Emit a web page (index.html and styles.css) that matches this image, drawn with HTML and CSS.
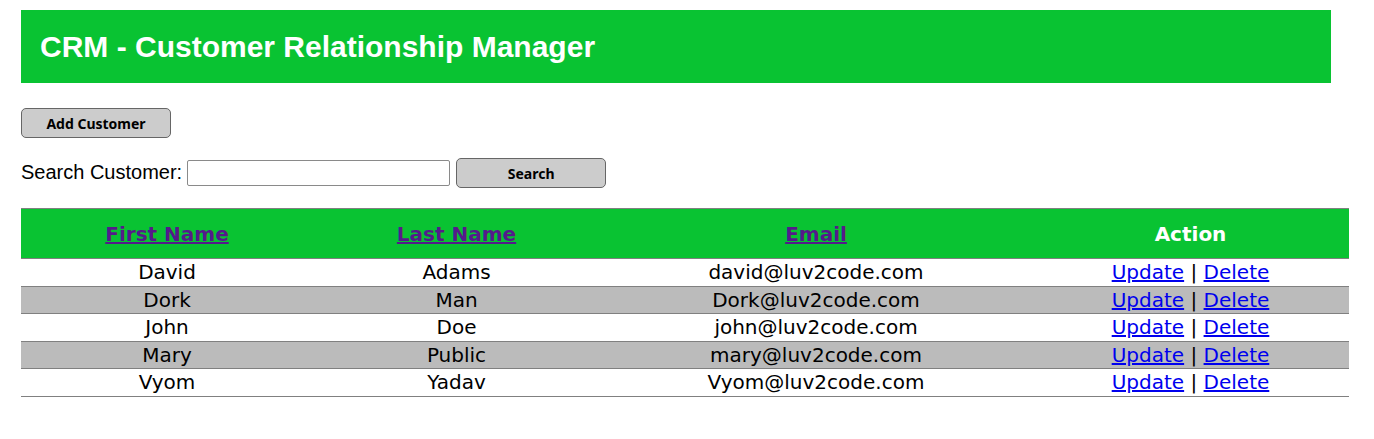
FILE: index.html
```html
<!DOCTYPE html>
<html>
<head>
<meta charset="utf-8">
<title>List Customers</title>
<link rel="stylesheet" href="styles.css">
</head>
<body>
<div class="wrapper">
  <div class="header">
    <h2 class="title">CRM - Customer Relationship Manager</h2>
  </div>
  <div class="container">
    <button class="btn add-button" type="button">Add Customer</button>
    <form class="search-row">
      <label class="search-label">Search Customer:</label>
      <input class="search-input" type="text">
      <button class="btn search-button" type="button">Search</button>
    </form>
    <table class="list">
      <colgroup>
        <col class="c1"><col class="c2"><col class="c3"><col class="c4">
      </colgroup>
      <tr>
        <th><a class="sort" href="#">First Name</a></th>
        <th><a class="sort" href="#">Last Name</a></th>
        <th><a class="sort" href="#">Email</a></th>
        <th>Action</th>
      </tr>
      <tr>
        <td>David</td><td>Adams</td><td>david@luv2code.com</td>
        <td><a class="act" href="#">Update</a> | <a class="act" href="#">Delete</a></td>
      </tr>
      <tr>
        <td>Dork</td><td>Man</td><td>Dork@luv2code.com</td>
        <td><a class="act" href="#">Update</a> | <a class="act" href="#">Delete</a></td>
      </tr>
      <tr>
        <td>John</td><td>Doe</td><td>john@luv2code.com</td>
        <td><a class="act" href="#">Update</a> | <a class="act" href="#">Delete</a></td>
      </tr>
      <tr>
        <td>Mary</td><td>Public</td><td>mary@luv2code.com</td>
        <td><a class="act" href="#">Update</a> | <a class="act" href="#">Delete</a></td>
      </tr>
      <tr>
        <td>Vyom</td><td>Yadav</td><td>Vyom@luv2code.com</td>
        <td><a class="act" href="#">Update</a> | <a class="act" href="#">Delete</a></td>
      </tr>
    </table>
  </div>
</div>
</body>
</html>
```

FILE: styles.css
```css
html, body {
  margin: 0;
  padding: 0;
  background: #ffffff;
}

.wrapper {
  padding: 10px 0 0 21px;
  font-family: "DejaVu Sans", Verdana, sans-serif;
}

.header {
  width: 1291px;
  height: 73px;
  padding-left: 19px;
  background: #09c332;
  display: flex;
  align-items: center;
}

.title {
  margin: 0;
  color: #ffffff;
  font-family: "Liberation Sans", Arial, sans-serif;
  font-weight: bold;
  font-size: 30px;
  line-height: 34px;
}

.container {
  display: flex;
  flex-direction: column;
  align-items: flex-start;
  padding-top: 25px;
}

.btn {
  width: 150px;
  height: 30px;
  margin: 0;
  padding: 2px 0 0 0;
  border: 1px solid #666666;
  border-radius: 5px;
  background: #cccccc;
  color: #000000;
  font-family: "Noto Sans", sans-serif;
  font-weight: bold;
  font-size: 14px;
  line-height: 18px;
}

.search-row {
  display: flex;
  align-items: center;
  margin: 20px 0 20px 0;
}

.search-label {
  font-family: "Liberation Sans", Arial, sans-serif;
  font-size: 20px;
  color: #000000;
  margin: 0 5px 2px 0;
}

.search-input {
  box-sizing: border-box;
  width: 263px;
  height: 26px;
  margin: 0 6px 0 0;
  padding: 1px 2px;
  border: 1px solid #8a8a8a;
  border-radius: 2px;
  background: #ffffff;
}

.list {
  width: 1328px;
  border-collapse: collapse;
  border-bottom: 1px solid gray;
  font-family: "DejaVu Sans", Tahoma, sans-serif;
  font-size: 20px;
  table-layout: fixed;
}

.c1 { width: 292px; }
.c2 { width: 287px; }
.c3 { width: 432px; }
.c4 { width: 317px; }

.list tr {
  border-top: 1px solid gray;
  text-align: center;
}

.list tr:nth-child(even) { background: #ffffff; }
.list tr:nth-child(odd) { background: #bbbbbb; }

.list th {
  border-bottom: 1px solid gray;
  background: #09c332;
  padding: 13px 10px 12px 10px;
  color: #ffffff;
  font-weight: bold;
  line-height: 24px;
}

.list td {
  padding: 1px;
  line-height: 24.5px;
  color: #000000;
}

.sort {
  color: #551a8b;
}

.act {
  color: #0000ee;
}
```
